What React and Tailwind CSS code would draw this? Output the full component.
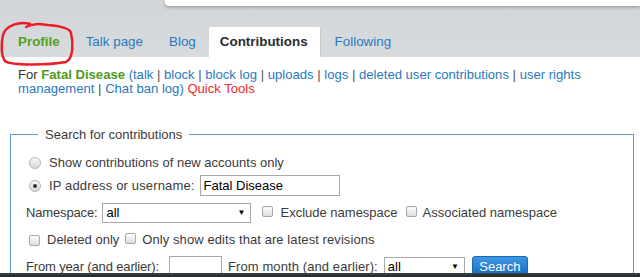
import React from "react";

const Sep = () => <span className="inline-block h-[14px] text-[#555]">|</span>;
const A = ({ children }) => <span className="inline-block h-[14px] text-[#2b79bd]">{children}</span>;

function Checkbox() {
  return (
    <span className="inline-block h-[11px] w-[11px] shrink-0 rounded-[2px] border border-[#a8a8a8] bg-gradient-to-b from-[#fdfdfd] to-[#dedede]" />
  );
}

function Radio({ checked }) {
  return (
    <span className="flex h-[12px] w-[12px] shrink-0 items-center justify-center rounded-full border border-[#b2b2b2] bg-gradient-to-b from-[#f7f7f7] to-[#d9d9d9]">
      {checked && <span className="h-[4px] w-[4px] rounded-full bg-[#333]" />}
    </span>
  );
}

function Select({ width, value }) {
  return (
    <span
      className={`flex h-[20px] items-center justify-between border border-[#a9a9a9] bg-white pl-[3px] pr-[5px] text-[13px] text-black ${width}`}
    >
      <span>{value}</span>
      <span className="text-[8px] leading-none text-black">▼</span>
    </span>
  );
}

export default function App() {
  return (
    <div className="relative h-[277px] w-[640px] overflow-hidden bg-white font-['Liberation_Sans',Arial,sans-serif] text-[13px]">
      {/* header strip with tabs */}
      <div className="flex h-[57px] flex-col bg-gradient-to-b from-[#d2d6d9] to-[#d7dbde]">
        <div className="ml-[165px] h-[6px] rounded-bl-[4px] bg-white shadow-[0_2px_3px_rgba(0,0,0,0.22)]" />
        <div className="mt-[21px] flex h-[30px] pl-[5px] text-[13.4px]">
          <div className="flex items-center px-[13px] font-bold text-[#55a01c]">Profile</div>
          <div className="flex items-center px-[13px] text-[#2b79bd]">Talk page</div>
          <div className="flex items-center px-[13px] text-[#2b79bd]">Blog</div>
          <div className="flex items-center rounded-t-[2px] border-r border-[#c6cbce] bg-white pl-[11px] pr-[12px] font-bold text-[#2c2c2c]">
            Contributions
          </div>
          <div className="flex items-center px-[14px] text-[#2b79bd]">Following</div>
        </div>
      </div>

      {/* red annotation around Profile */}
      <svg className="absolute left-0 top-0" width="80" height="70" viewBox="0 0 80 70" fill="none">
        <path
          d="M30 24 C20 21 6 25 3 35 C1 44 1 56 5 61 C12 66 50 65 66 62 C74 58 73 42 71 33 C70 28 60 26 48 25 C40 24 33 23 26 27"
          stroke="#ec1c24"
          strokeWidth="2.5"
          strokeLinecap="round"
        />
      </svg>

      {/* user links */}
      <div className="pl-[18px] pr-[4px] pt-[11px] text-[13.1px] leading-[14px] text-[#333]">
        <span className="inline-block h-[14px]">For</span>{" "}
        <span className="inline-block h-[14px] font-bold text-[#4e9b1b]">Fatal Disease</span>{" "}
        <A>(talk</A> <Sep /> <A>block</A> <Sep /> <A>block log</A> <Sep /> <A>uploads</A> <Sep />{" "}
        <A>logs</A> <Sep /> <A>deleted user contributions</A> <Sep /> <A>user rights</A>{" "}
        <A>management</A> <Sep /> <A>Chat ban log)</A>{" "}
        <span className="inline-block h-[14px] text-[#f2262b]">Quick Tools</span>
      </div>

      {/* search form */}
      <fieldset className="ml-[10px] mr-[6px] mt-[31px] border border-[#5d9dd6] pl-[15px] text-[#3b3b3b]">
        <legend className="ml-[12px] px-[7px] leading-[15px]">Search for contributions</legend>

        <div className="ml-[3px] mt-[12px] flex h-[18px] items-center gap-[8px]">
          <Radio />
          <span>Show contributions of new accounts only</span>
        </div>

        <div className="ml-[3px] mt-[3px] flex h-[21px] items-center">
          <Radio checked />
          <span className="ml-[8px] tracking-[0.15px]">IP address or username:</span>
          <span className="ml-[5px] flex h-[21px] w-[140px] items-center border border-[#a9a9a9] bg-white pl-[3px] text-black">
            Fatal Disease
          </span>
        </div>

        <div className="mt-[7px] flex h-[20px] items-center">
          <span className="tracking-[-0.15px]">Namespace:</span>
          <span className="ml-[5px]">
            <Select width="w-[149px]" value="all" />
          </span>
          <span className="ml-[11px]">
            <Checkbox />
          </span>
          <span className="ml-[7px]">Exclude namespace</span>
          <span className="ml-[8px]">
            <Checkbox />
          </span>
          <span className="ml-[6px]">Associated namespace</span>
        </div>

        <div className="ml-[3px] mt-[8px] flex h-[18px] items-center">
          <Checkbox />
          <span className="ml-[7px]">Deleted only</span>
          <span className="ml-[6px]">
            <Checkbox />
          </span>
          <span className="ml-[6px] tracking-[0.08px]">Only show edits that are latest revisions</span>
        </div>

        <div className="mt-[7px] flex h-[21px] items-center">
          <span className="tracking-[-0.15px]">From year (and earlier):</span>
          <span className="ml-[10px] h-[21px] w-[53px] border border-[#a9a9a9] bg-white" />
          <span className="ml-[6px] tracking-[0.1px]">From month (and earlier):</span>
          <span className="ml-[6px]">
            <Select width="w-[81px]" value="all" />
          </span>
          <span className="ml-[7px] flex h-[21px] w-[56px] items-center justify-center rounded-t-[3px] border border-[#1a67ad] bg-gradient-to-b from-[#3d98e3] to-[#0f6cc0] text-white">
            Search
          </span>
        </div>
      </fieldset>

      {/* dark edge at the bottom of the capture */}
      <div className="absolute bottom-0 left-0 h-[4px] w-full bg-gradient-to-b from-[#3b4247] to-[#22282c]" />
    </div>
  );
}
